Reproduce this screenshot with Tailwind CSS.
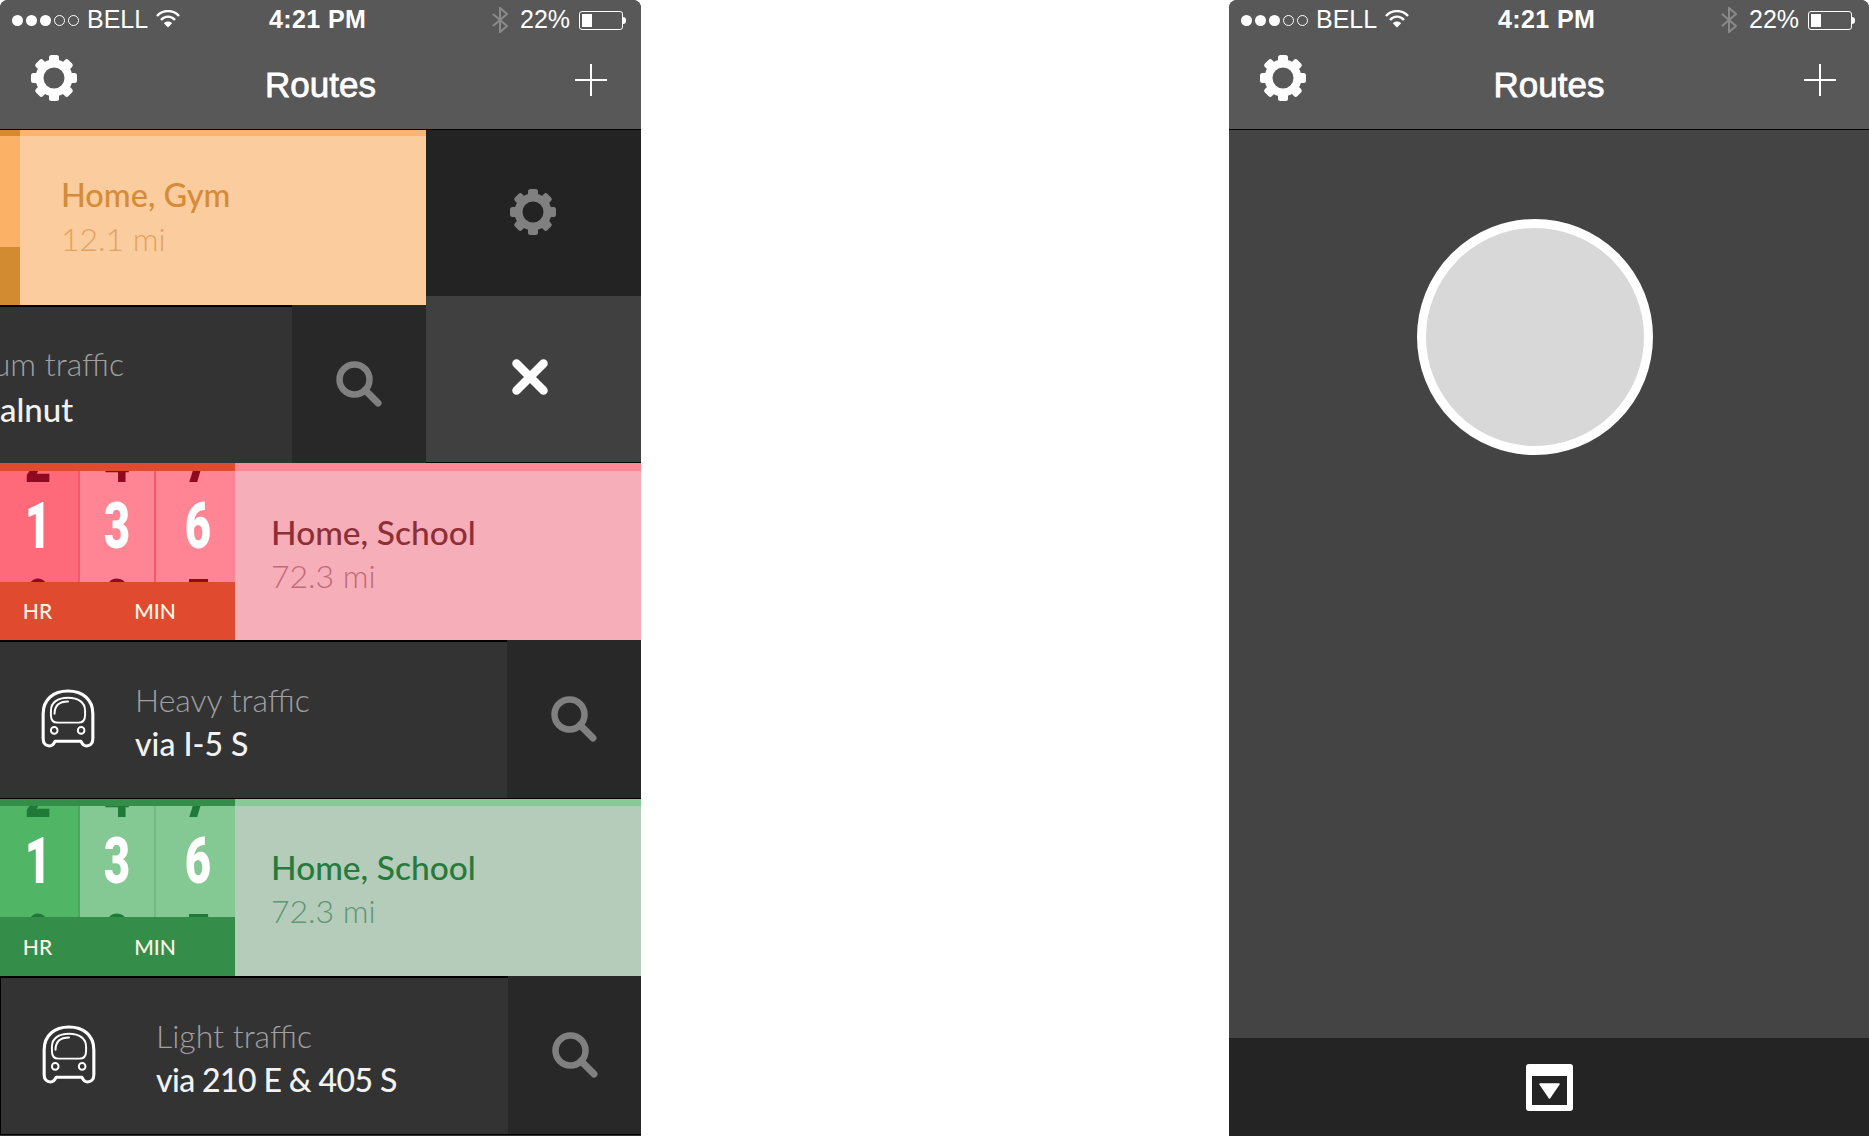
<!DOCTYPE html>
<html lang="en">
<head>
<meta charset="UTF-8" />
<title>Routes</title>
<script src="https://cdn.jsdelivr.net/npm/@tailwindcss/browser@4"></script>
</head>
<body class="bg-white w-[1869px] h-[1136px] overflow-hidden flex justify-between font-['Lato',sans-serif]">
<svg class="hidden">
  <symbol id="gear" viewBox="0 0 46 46">
    <g fill="currentColor">
      <rect x="18" y="0" width="10" height="10" rx="2.5"/>
      <rect x="18" y="0" width="10" height="10" rx="2.5" transform="rotate(45 23 23)"/>
      <rect x="18" y="0" width="10" height="10" rx="2.5" transform="rotate(90 23 23)"/>
      <rect x="18" y="0" width="10" height="10" rx="2.5" transform="rotate(135 23 23)"/>
      <rect x="18" y="0" width="10" height="10" rx="2.5" transform="rotate(180 23 23)"/>
      <rect x="18" y="0" width="10" height="10" rx="2.5" transform="rotate(225 23 23)"/>
      <rect x="18" y="0" width="10" height="10" rx="2.5" transform="rotate(270 23 23)"/>
      <rect x="18" y="0" width="10" height="10" rx="2.5" transform="rotate(315 23 23)"/>
    </g>
    <circle cx="23" cy="23" r="14.5" fill="none" stroke="currentColor" stroke-width="8"/>
  </symbol>
  <symbol id="search" viewBox="0 0 46 46">
    <circle cx="18.5" cy="18.5" r="15" fill="none" stroke="currentColor" stroke-width="6.5"/>
    <path d="M29 29 L42 42" fill="none" stroke="currentColor" stroke-width="7" stroke-linecap="round"/>
  </symbol>
  <symbol id="bus" viewBox="0 0 52 57">
    <g fill="none" stroke="currentColor" stroke-linejoin="round">
      <path stroke-width="3" d="M2 24C2 10 12 2 26 2C40 2 50 10 50 24V48C50 53 47 55 44 55C41 55 39.5 53 38.5 50.5H13.5C12.5 53 11 55 8 55C5 55 2 53 2 48Z"/>
      <path stroke-width="1.9" d="M9.5 21C9.5 13 16 8.5 26 8.5C36 8.5 42.5 13 42.5 21V25C42.5 30 40 32.5 36 32.5H16C12 32.5 9.5 30 9.5 25Z"/>
      <path stroke-width="1.9" stroke-linecap="round" d="M13 24C13 16 18 12 26 12"/>
      <circle stroke-width="1.9" cx="12.7" cy="40" r="3.2"/>
      <circle stroke-width="1.9" cx="38.7" cy="40" r="3.2"/>
    </g>
  </symbol>
</svg>

<!-- left phone: list with one row swiped open -->
<div class="w-[641px] h-[1136px] bg-[#333333] rounded-t-lg overflow-hidden flex flex-col shrink-0">
  <header class="h-[130px] shrink-0 bg-[#585858] border-b border-black relative font-['Liberation_Sans',sans-serif] text-white">
    <div class="h-[40px] flex items-center relative text-[25px]">
      <div class="ml-[12px] flex gap-[3px] items-center">
        <span class="w-[11px] h-[11px] rounded-full bg-white"></span>
        <span class="w-[11px] h-[11px] rounded-full bg-white"></span>
        <span class="w-[11px] h-[11px] rounded-full bg-white"></span>
        <span class="w-[11px] h-[11px] rounded-full border border-white"></span>
        <span class="w-[11px] h-[11px] rounded-full border border-white"></span>
      </div>
      <span class="ml-[8px]">BELL</span>
      <svg class="ml-[8px] mb-[3px]" width="24" height="18" viewBox="0 0 24 18" fill="none" stroke="white" stroke-width="2.4"><path d="M1 6C7-.5 17-.5 23 6"/><path d="M5 10C9 5.5 15 5.5 19 10"/><path d="M12 17.5L7.8 13.2C10 11 14 11 16.2 13.2Z" fill="white" stroke="none"/></svg>
      <span class="absolute left-[269px] font-bold tracking-[0.4px]">4:21 PM</span>
      <div class="absolute left-[492px] flex items-center">
        <svg width="16" height="26" viewBox="0 0 16 26" fill="none" stroke="#8a8a8a" stroke-width="2"><path d="M1 7L15 19L8 25V1L15 7L1 19"/></svg>
        <span class="ml-[12px]">22%</span>
        <div class="ml-[9px] w-[44px] h-[19px] rounded-[3px] border border-white p-[2px]"><div class="w-[10px] h-full bg-white"></div></div>
        <div class="w-[3px] h-[7px] bg-white rounded-r-sm"></div>
      </div>
    </div>
    <svg class="absolute left-[31px] top-[55px] w-[46px] h-[46px] text-white"><use href="#gear"/></svg>
    <h1 class="absolute inset-x-0 top-[65px] text-center text-[35px] leading-[40px] [-webkit-text-stroke:0.8px_white]">Routes</h1>
    <svg class="absolute left-[575px] top-[64px]" width="32" height="32" viewBox="0 0 32 32" stroke="white" stroke-width="2"><path d="M16 0V32M0 16H32"/></svg>
  </header>

  <section class="flex h-[333px] shrink-0">
    <div class="w-[426px] flex flex-col">
      <div class="h-[175px] flex bg-[#fbcd9e]">
        <div class="w-[20px] flex flex-col">
          <div class="h-[6px] bg-[#d38b32]"></div>
          <div class="h-[111px] bg-[#fbb266]"></div>
          <div class="flex-1 bg-[#d38b32]"></div>
        </div>
        <div class="flex-1">
          <div class="h-[6px] bg-[#fbb471]"></div>
          <div class="pl-[41px] pt-[37px]">
            <div class="text-[32.5px] leading-[44px] font-medium text-[#d58b39]">Home, Gym</div>
            <div class="text-[32px] leading-[44px] font-light text-[#e5a160]">12.1 mi</div>
          </div>
        </div>
      </div>
      <div class="flex-1 flex">
        <div class="w-[292px] bg-[#333333] border-t-2 border-black overflow-hidden pt-[35px]">
          <div class="w-[124px] flex justify-end text-[32px] leading-[44px] font-light text-[#a0a0a0] whitespace-nowrap">Medium traffic</div>
          <div class="text-[33px] leading-[44px] mt-[1px] font-medium text-[#f2f2f2] whitespace-nowrap">alnut</div>
        </div>
        <div class="flex-1 bg-[#282828] flex items-center justify-center pb-[1px]">
          <svg class="w-[46px] h-[46px] text-[#808080]"><use href="#search"/></svg>
        </div>
      </div>
    </div>
    <div class="flex-1 flex flex-col">
      <div class="h-[166px] bg-[#232323] flex items-center justify-center pb-[2px] pr-[2px]">
        <svg class="w-[46px] h-[46px] text-[#808080]"><use href="#gear"/></svg>
      </div>
      <div class="flex-1 bg-[#404040] border-b border-black flex items-center justify-center pr-[7px] pb-[4px]">
        <svg width="36" height="36" viewBox="0 0 36 36" stroke="white" stroke-width="8.5" stroke-linecap="round"><path d="M4.5 4.5L31.5 31.5M31.5 4.5L4.5 31.5"/></svg>
      </div>
    </div>
  </section>

  <!-- red route -->
  <section class="h-[177px] shrink-0 flex bg-[#f6aeb8]">
    <div class="w-[235px] flex flex-col bg-[#e04a2f]">
      <div class="h-[8px]"></div>
      <div class="h-[111px] flex text-[#8f0a20] text-[65px] leading-[69px] font-['Roboto',sans-serif] font-black">
        <div class="w-[80px] bg-[#ff6a7a] border-r-2 border-[#f4596a] overflow-hidden flex flex-col items-center justify-center pt-[10px] pr-[2px]">
          <span class="shrink-0 scale-x-70 mb-[-3px]">2</span><span class="shrink-0 scale-x-70 text-white">1</span><span class="shrink-0 scale-x-70 mt-[8px]">0</span>
        </div>
        <div class="w-[76px] bg-[#ff8494] border-r-2 border-[#f4596a] overflow-hidden flex flex-col items-center justify-center pt-[10px]">
          <span class="shrink-0 scale-x-70 mb-[-3px]">4</span><span class="shrink-0 scale-x-70 text-white">3</span><span class="shrink-0 scale-x-70 mt-[8px]">2</span>
        </div>
        <div class="flex-1 bg-[#ff8494] overflow-hidden flex flex-col items-center justify-center pt-[10px] pl-[4px]">
          <span class="shrink-0 scale-x-70 mb-[-3px]">7</span><span class="shrink-0 scale-x-70 text-white">6</span><span class="shrink-0 scale-x-70 mt-[8px]">5</span>
        </div>
      </div>
      <div class="flex-1 flex items-center text-[21px] font-medium text-[#fff5e6]">
        <span class="w-[76px] text-center">HR</span><span class="w-[162px] text-center">MIN</span>
      </div>
    </div>
    <div class="flex-1">
      <div class="h-[8px] bg-[#ff8896]"></div>
      <div class="pl-[36px] pt-[39px]">
        <div class="text-[33.5px] leading-[44px] font-medium text-[#8e2f37]">Home, School</div>
        <div class="text-[32px] leading-[44px] font-light text-[#c06a78]">72.3 mi</div>
      </div>
    </div>
  </section>

  <section class="h-[158px] shrink-0 flex">
    <div class="w-[507px] bg-[#333333] border-t-2 border-black flex items-center">
      <svg class="ml-[41px] mb-[3px] w-[54px] h-[59px] text-white"><use href="#bus"/></svg>
      <div class="ml-[40px] mt-[3px]">
        <div class="text-[32px] leading-[44px] font-light text-[#a0a0a0]">Heavy traffic</div>
        <div class="text-[32px] leading-[44px] font-medium text-[#f2f2f2]">via I-5 S</div>
      </div>
    </div>
    <div class="flex-1 bg-[#282828] flex items-center justify-center">
      <svg class="w-[46px] h-[46px] text-[#808080]"><use href="#search"/></svg>
    </div>
  </section>

  <!-- green route -->
  <section class="h-[178px] shrink-0 flex bg-[#b4ccb9] border-t border-black">
    <div class="w-[235px] flex flex-col bg-[#348e4a]">
      <div class="h-[7px]"></div>
      <div class="h-[111px] flex text-[#1f7a38] text-[65px] leading-[69px] font-['Roboto',sans-serif] font-black">
        <div class="w-[80px] bg-[#51b566] border-r-2 border-[#4aa65d] overflow-hidden flex flex-col items-center justify-center pt-[10px] pr-[2px]">
          <span class="shrink-0 scale-x-70 mb-[-3px]">2</span><span class="shrink-0 scale-x-70 text-white">1</span><span class="shrink-0 scale-x-70 mt-[8px]">0</span>
        </div>
        <div class="w-[76px] bg-[#84c894] border-r-2 border-[#72b985] overflow-hidden flex flex-col items-center justify-center pt-[10px]">
          <span class="shrink-0 scale-x-70 mb-[-3px]">4</span><span class="shrink-0 scale-x-70 text-white">3</span><span class="shrink-0 scale-x-70 mt-[8px]">2</span>
        </div>
        <div class="flex-1 bg-[#84c894] overflow-hidden flex flex-col items-center justify-center pt-[10px] pl-[4px]">
          <span class="shrink-0 scale-x-70 mb-[-3px]">7</span><span class="shrink-0 scale-x-70 text-white">6</span><span class="shrink-0 scale-x-70 mt-[8px]">5</span>
        </div>
      </div>
      <div class="flex-1 flex items-center text-[21px] font-medium text-[#fff5e6]">
        <span class="w-[76px] text-center">HR</span><span class="w-[162px] text-center">MIN</span>
      </div>
    </div>
    <div class="flex-1">
      <div class="h-[7px] bg-[#89c998]"></div>
      <div class="pl-[36px] pt-[39px]">
        <div class="text-[33.5px] leading-[44px] font-medium text-[#267a3b]">Home, School</div>
        <div class="text-[32px] leading-[44px] font-light text-[#5f9676]">72.3 mi</div>
      </div>
    </div>
  </section>

  <section class="flex-1 flex border-b border-black mb-[1px]">
    <div class="w-[508px] bg-[#333333] border-t-2 border-l border-black flex items-center">
      <svg class="ml-[41px] mb-[3px] w-[54px] h-[59px] text-white"><use href="#bus"/></svg>
      <div class="ml-[60px] mt-[4px]">
        <div class="text-[32px] leading-[44px] font-light text-[#a0a0a0]">Light traffic</div>
        <div class="text-[32px] leading-[44px] font-medium tracking-[-0.6px] text-[#f2f2f2]">via 210 E &amp; 405 S</div>
      </div>
    </div>
    <div class="flex-1 bg-[#282828] flex items-center justify-center">
      <svg class="w-[46px] h-[46px] text-[#808080]"><use href="#search"/></svg>
    </div>
  </section>
</div>

<!-- right phone: empty map state -->
<div class="w-[640px] h-[1136px] bg-[#444444] rounded-t-lg overflow-hidden flex flex-col shrink-0">
  <header class="h-[130px] shrink-0 bg-[#585858] border-b border-black relative font-['Liberation_Sans',sans-serif] text-white">
    <div class="h-[40px] flex items-center relative text-[25px]">
      <div class="ml-[12px] flex gap-[3px] items-center">
        <span class="w-[11px] h-[11px] rounded-full bg-white"></span>
        <span class="w-[11px] h-[11px] rounded-full bg-white"></span>
        <span class="w-[11px] h-[11px] rounded-full bg-white"></span>
        <span class="w-[11px] h-[11px] rounded-full border border-white"></span>
        <span class="w-[11px] h-[11px] rounded-full border border-white"></span>
      </div>
      <span class="ml-[8px]">BELL</span>
      <svg class="ml-[8px] mb-[3px]" width="24" height="18" viewBox="0 0 24 18" fill="none" stroke="white" stroke-width="2.4"><path d="M1 6C7-.5 17-.5 23 6"/><path d="M5 10C9 5.5 15 5.5 19 10"/><path d="M12 17.5L7.8 13.2C10 11 14 11 16.2 13.2Z" fill="white" stroke="none"/></svg>
      <span class="absolute left-[269px] font-bold tracking-[0.4px]">4:21 PM</span>
      <div class="absolute left-[492px] flex items-center">
        <svg width="16" height="26" viewBox="0 0 16 26" fill="none" stroke="#8a8a8a" stroke-width="2"><path d="M1 7L15 19L8 25V1L15 7L1 19"/></svg>
        <span class="ml-[12px]">22%</span>
        <div class="ml-[9px] w-[44px] h-[19px] rounded-[3px] border border-white p-[2px]"><div class="w-[10px] h-full bg-white"></div></div>
        <div class="w-[3px] h-[7px] bg-white rounded-r-sm"></div>
      </div>
    </div>
    <svg class="absolute left-[31px] top-[55px] w-[46px] h-[46px] text-white"><use href="#gear"/></svg>
    <h1 class="absolute inset-x-0 top-[65px] text-center text-[35px] leading-[40px] [-webkit-text-stroke:0.8px_white]">Routes</h1>
    <svg class="absolute left-[575px] top-[64px]" width="32" height="32" viewBox="0 0 32 32" stroke="white" stroke-width="2"><path d="M16 0V32M0 16H32"/></svg>
  </header>
  <main class="flex-1 pt-[89px] pl-[188px]">
    <div class="w-[236px] h-[236px] rounded-full bg-[#d8d8d8] border-[9px] border-white"></div>
  </main>
  <footer class="h-[98px] shrink-0 bg-[#242424] flex items-center justify-center">
    <svg width="47" height="47" viewBox="0 0 47 47">
      <rect width="47" height="47" rx="3" fill="white"/>
      <rect x="6" y="12" width="35" height="29" fill="#242424"/>
      <path d="M14 20H33L23.5 34Z" fill="white" stroke="white" stroke-width="1.5" stroke-linejoin="round"/>
    </svg>
  </footer>
</div>
</body>
</html>
